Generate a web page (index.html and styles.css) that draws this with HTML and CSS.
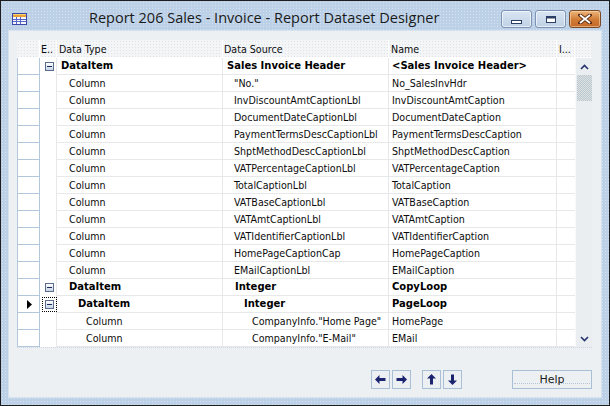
FILE: index.html
```html
<!DOCTYPE html>
<html>
<head>
<meta charset="utf-8">
<link rel="stylesheet" href="styles.css">
</head>
<body>
<div class="window">
  <div class="titlebar">
    <svg class="appicon" width="15" height="12" viewBox="0 0 15 12">
      <rect x="0.5" y="0.5" width="14" height="11" fill="#f4f6fb" stroke="#3b4aa8"/>
      <rect x="1" y="1" width="13" height="3" fill="#e9a23a"/>
      <rect x="1" y="1" width="13" height="1" fill="#f6cf6e"/>
      <path d="M1 6.5H14M1 8.5H14M4.5 4V11M8.5 4V11" stroke="#5565c8" stroke-width="1"/>
    </svg>
    <div class="title">Report 206 Sales - Invoice - Report Dataset Designer</div>
    <div class="controls">
      <div class="ctl">
        <svg width="12" height="6" viewBox="0 0 12 6"><rect x="0.5" y="1.5" width="10" height="3" fill="#fff" stroke="#2b3f66"/></svg>
      </div>
      <div class="ctl">
        <svg width="12" height="9" viewBox="0 0 12 9"><rect x="1.5" y="1.5" width="9" height="6" fill="#fff" stroke="#2b3f66"/><rect x="1.5" y="1.5" width="9" height="2" fill="#2b3f66"/></svg>
      </div>
      <div class="ctl close">
        <svg width="14" height="10" viewBox="0 0 14 10"><path d="M2 1L12 9M12 1L2 9" stroke="#5a2a12" stroke-width="3.6" stroke-linecap="square"/><path d="M2 1L12 9M12 1L2 9" stroke="#fff" stroke-width="1.8"/></svg>
      </div>
    </div>
  </div>
  <div class="client">
    <div class="grid">
      <div class="head">
        <div class="hc hsel"></div>
        <div class="hc">E..</div>
        <div class="hc">Data Type</div>
        <div class="hc">Data Source</div>
        <div class="hc">Name</div>
        <div class="hc">I...</div>
        <div class="hc hscroll"></div>
      </div>
      <div class="body">
        <div class="rows">
          <div class="row b"><div class="sel"></div><div class="e"><span class="exp"></span></div><div class="c l0">DataItem</div><div class="c s0">Sales Invoice Header</div><div class="c n">&lt;Sales Invoice Header&gt;</div><div class="c i"></div></div>
          <div class="row"><div class="sel"></div><div class="e"></div><div class="c l1">Column</div><div class="c s1">"No."</div><div class="c n">No_SalesInvHdr</div><div class="c i"></div></div>
          <div class="row"><div class="sel"></div><div class="e"></div><div class="c l1">Column</div><div class="c s1">InvDiscountAmtCaptionLbl</div><div class="c n">InvDiscountAmtCaption</div><div class="c i"></div></div>
          <div class="row"><div class="sel"></div><div class="e"></div><div class="c l1">Column</div><div class="c s1">DocumentDateCaptionLbl</div><div class="c n">DocumentDateCaption</div><div class="c i"></div></div>
          <div class="row"><div class="sel"></div><div class="e"></div><div class="c l1">Column</div><div class="c s1">PaymentTermsDescCaptionLbl</div><div class="c n">PaymentTermsDescCaption</div><div class="c i"></div></div>
          <div class="row"><div class="sel"></div><div class="e"></div><div class="c l1">Column</div><div class="c s1">ShptMethodDescCaptionLbl</div><div class="c n">ShptMethodDescCaption</div><div class="c i"></div></div>
          <div class="row"><div class="sel"></div><div class="e"></div><div class="c l1">Column</div><div class="c s1">VATPercentageCaptionLbl</div><div class="c n">VATPercentageCaption</div><div class="c i"></div></div>
          <div class="row"><div class="sel"></div><div class="e"></div><div class="c l1">Column</div><div class="c s1">TotalCaptionLbl</div><div class="c n">TotalCaption</div><div class="c i"></div></div>
          <div class="row"><div class="sel"></div><div class="e"></div><div class="c l1">Column</div><div class="c s1">VATBaseCaptionLbl</div><div class="c n">VATBaseCaption</div><div class="c i"></div></div>
          <div class="row"><div class="sel"></div><div class="e"></div><div class="c l1">Column</div><div class="c s1">VATAmtCaptionLbl</div><div class="c n">VATAmtCaption</div><div class="c i"></div></div>
          <div class="row"><div class="sel"></div><div class="e"></div><div class="c l1">Column</div><div class="c s1">VATIdentifierCaptionLbl</div><div class="c n">VATIdentifierCaption</div><div class="c i"></div></div>
          <div class="row"><div class="sel"></div><div class="e"></div><div class="c l1">Column</div><div class="c s1">HomePageCaptionCap</div><div class="c n">HomePageCaption</div><div class="c i"></div></div>
          <div class="row"><div class="sel"></div><div class="e"></div><div class="c l1">Column</div><div class="c s1">EMailCaptionLbl</div><div class="c n">EMailCaption</div><div class="c i"></div></div>
          <div class="row b"><div class="sel"></div><div class="e"><span class="exp"></span></div><div class="c l1">DataItem</div><div class="c s2">Integer</div><div class="c n">CopyLoop</div><div class="c i"></div></div>
          <div class="row b"><div class="sel"><svg class="cur" width="5" height="9" viewBox="0 0 5 9"><path d="M0 0L5 4.5L0 9Z" fill="#000"/></svg></div><div class="e"><span class="exp focus"></span></div><div class="c l2">DataItem</div><div class="c s3">Integer</div><div class="c n">PageLoop</div><div class="c i"></div></div>
          <div class="row"><div class="sel"></div><div class="e"></div><div class="c l3">Column</div><div class="c s4">CompanyInfo."Home Page"</div><div class="c n">HomePage</div><div class="c i"></div></div>
          <div class="row"><div class="sel"></div><div class="e"></div><div class="c l3">Column</div><div class="c s4">CompanyInfo."E-Mail"</div><div class="c n">EMail</div><div class="c i"></div></div>
        </div>
        <div class="vscroll">
          <svg class="arr" width="9" height="6" viewBox="0 0 9 6"><path d="M1 5L4.5 1.5L8 5" fill="none" stroke="#26346e" stroke-width="1.6"/></svg>
          <div class="thumb"></div>
          <div class="track"></div>
          <svg class="arr" width="9" height="6" viewBox="0 0 9 6"><path d="M1 1L4.5 4.5L8 1" fill="none" stroke="#26346e" stroke-width="1.6"/></svg>
        </div>
      </div>
    </div>
    <div class="footer">
      <div class="btngroup">
        <div class="btn sm"><svg width="11" height="9" viewBox="0 0 11 9"><path d="M0 4.5L4.5 0V3H10.5V6H4.5V9Z" fill="#1c2470"/></svg></div>
        <div class="btn sm"><svg width="11" height="9" viewBox="0 0 11 9"><path d="M11 4.5L6.5 0V3H0.5V6H6.5V9Z" fill="#1c2470"/></svg></div>
      </div>
      <div class="btngroup">
        <div class="btn sm"><svg width="9" height="11" viewBox="0 0 9 11"><path d="M4.5 0L9 4.5H6V10.5H3V4.5H0Z" fill="#1c2470"/></svg></div>
        <div class="btn sm"><svg width="9" height="11" viewBox="0 0 9 11"><path d="M4.5 11L9 6.5H6V0.5H3V6.5H0Z" fill="#1c2470"/></svg></div>
      </div>
      <div class="btn help"><span class="helpfocus"></span><span class="helptext">Help</span></div>
    </div>
  </div>
</div>
</body>
</html>
```
FILE: styles.css
```css
* { box-sizing: border-box; }
html, body { margin: 0; padding: 0; }
body { width: 610px; height: 406px; overflow: hidden; background: #fff; }

.window {
  width: 610px;
  height: 406px;
  border: 1px solid #1d1d1d;
  background-color: #bcd1e7;
  background-image: radial-gradient(circle, rgba(255,255,255,0.35) 0.6px, transparent 0.8px);
  background-size: 3px 3px;
  padding: 0 7px 7px 7px;
  display: flex;
  flex-direction: column;
}

.titlebar {
  height: 29px;
  display: flex;
  align-items: flex-start;
  position: relative;
}
.appicon { margin: 12px 0 0 4px; }
.title {
  font-family: "Open Sans", "Noto Sans", sans-serif;
  font-size: 14.5px;
  color: #1a1a1a;
  margin: 7px 0 0 62px;
  letter-spacing: 0;
  white-space: nowrap;
}
.controls {
  margin-left: auto;
  margin-top: 9px;
  display: flex;
  gap: 3px;
  margin-right: 1px;
}
.ctl {
  width: 31px;
  height: 18px;
  border: 1px solid #7e93b3;
  border-radius: 3px;
  background: linear-gradient(#d9e5f2, #bfd1e5);
  display: flex;
  align-items: center;
  justify-content: center;
  box-shadow: inset 0 0 0 1px rgba(255,255,255,0.6);
}
.ctl:nth-child(1) svg { margin-top: 5px; }
.ctl.close {
  width: 32px;
  border-color: #7a4a2a;
  background: linear-gradient(#ebb57c, #d07a35 55%, #c4692a);
  box-shadow: inset 0 0 0 1px rgba(255,230,190,0.5);
}

.client {
  flex: 1;
  background: #edf0f2;
  border: 1px solid #d6e2ee;
  padding: 9px 9px 0 8px;
  display: flex;
  flex-direction: column;
}

.grid {
  width: 575px;
  font-family: "DejaVu Sans", sans-serif;
  font-stretch: condensed;
  font-size: 10.6px;
  color: #0c0c0c;
  border-bottom: 1px dotted #cfd6dd;
}
.head {
  display: grid;
  grid-template-columns: 23px 17px 166px 166px 168px 18px 17px;
  height: 18px;
  background-color: #f3f5f7;
  background-image: radial-gradient(circle, rgba(215,220,226,0.7) 0.5px, transparent 0.7px);
  background-size: 3px 3px;
  border-bottom: 1px solid #ffffff;
}
.hc {
  border-right: 1px solid #ffffff;
  padding: 2px 0 0 1px;
  white-space: nowrap;
  overflow: hidden;
  line-height: 14px;
}
.hc:nth-child(3) { padding-left: 2px; }
.hc:nth-child(5) { padding-left: 2px; }
.hc:nth-child(6) { padding-left: 2px; }
.hscroll { border-right: none; }

.body { display: flex; }
.rows { width: 558px; }
.row {
  display: grid;
  grid-template-columns: 23px 17px 166px 166px 168px 18px;
  height: 17px;
  background: #fff;
}
.row.b .c { font-weight: bold; font-stretch: normal; font-size: 10px; color: #000; }
.row.b .c.i { font-weight: normal; }
.sel {
  border: 1px solid #b3c7dc;
  border-top: none;
  background: #fff;
  display: flex;
  align-items: center;
  padding-left: 9px;
}
.e {
  display: flex;
  align-items: center;
  padding-left: 5px;
  border-right: 1px solid #e6e8ea;
}
.c {
  border-right: 1px solid #e6e8ea;
  border-bottom: 1px solid #e6e8ea;
  white-space: nowrap;
  overflow: hidden;
  line-height: 16px;
}
.c.i { border-right: none; }
.l0 { padding-left: 4px; }
.l1 { padding-left: 12px; }
.l2 { padding-left: 21px; }
.l3 { padding-left: 29px; }
.s0 { padding-left: 4px; }
.s1 { padding-left: 11px; }
.s2 { padding-left: 12px; }
.s3 { padding-left: 21px; }
.s4 { padding-left: 29px; }
.n { padding-left: 3px; }

.exp {
  width: 9px;
  height: 9px;
  border: 1px solid #5b6d8e;
  background: linear-gradient(#ffffff, #c7d4e4);
  position: relative;
  display: block;
}
.exp::after {
  content: "";
  position: absolute;
  left: 1px;
  top: 3px;
  width: 5px;
  height: 1px;
  background: #1a2a58;
}
.exp.focus { outline: 1px dotted #000; outline-offset: 2px; }

.vscroll {
  width: 17px;
  background: #ebeef0;
  border-left: 1px solid #f8f9fa;
  display: flex;
  flex-direction: column;
  align-items: center;
}
.vscroll .arr { margin-top: 6px; flex: none; }
.vscroll .arr:last-child { margin: 0 0 5px 0; }
.thumb {
  width: 15px;
  height: 26px;
  margin-top: 5px;
  background-color: #c8d2dc;
  background-image: repeating-conic-gradient(#b9c6d3 0 25%, #dfe3df 0 50%);
  background-size: 2px 2px;
  flex: none;
}
.track { flex: 1; }

.footer {
  display: flex;
  margin-top: 22px;
  padding-left: 354px;
}
.btngroup { display: flex; gap: 2px; margin-right: 11px; }
.btn {
  height: 19px;
  border: 1px solid #a9bfd6;
  background: #edf0f2;
  display: flex;
  align-items: center;
  justify-content: center;
}
.btn.sm { width: 19px; }
.btn.help {
  width: 81px;
  height: 19px;
  margin-left: 39px;
  font-family: "DejaVu Sans", sans-serif;
  font-size: 11px;
  color: #1a1a1a;
  position: relative;
}
.helpfocus {
  position: absolute;
  left: 1px;
  right: 1px;
  top: 12px;
  border-top: 1px dotted #b8c6d4;
}
.helptext { position: relative; }
```
